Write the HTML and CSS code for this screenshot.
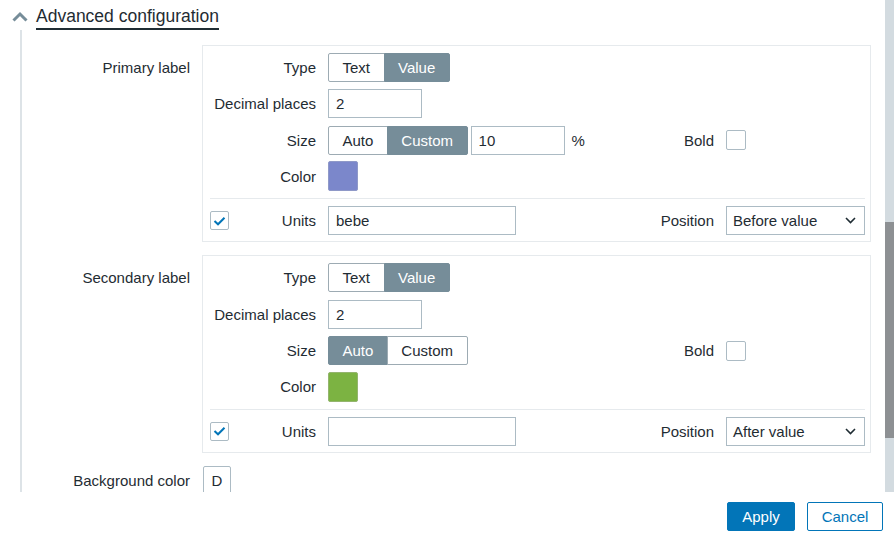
FILE: index.html
```html
<!DOCTYPE html>
<html lang="en">
<head>
<meta charset="utf-8">
<title>Advanced configuration</title>
<link rel="stylesheet" href="styles.css">
</head>
<body>
<div class="app">
  <div class="viewport">
    <div class="content">
      <div class="section-head">
        <svg class="chevron" width="16" height="11" viewBox="0 0 16 11"><path d="M1.5 9.5 L8 3 L14.5 9.5" fill="none" stroke="#768d99" stroke-width="3"/></svg>
        <span class="title">Advanced configuration</span>
      </div>
      <div class="section-body">
        <div class="form-grid">
          <div class="outer-label">Primary label</div>
          <div class="box">
            <div class="lbl">Type</div>
            <div class="ctl span3">
              <div class="seg"><span class="seg-btn">Text</span><span class="seg-btn on">Value</span></div>
            </div>

            <div class="lbl">Decimal places</div>
            <div class="ctl span3"><div class="input w94">2</div></div>

            <div class="lbl">Size</div>
            <div class="ctl">
              <div class="seg"><span class="seg-btn">Auto</span><span class="seg-btn on">Custom</span></div>
              <div class="input w94 gap3">10</div>
              <span class="unit">%</span>
            </div>
            <div class="lbl">Bold</div>
            <div class="ctl"><span class="check"></span></div>

            <div class="lbl">Color</div>
            <div class="ctl span3"><span class="swatch purple"></span></div>

            <div class="sep"></div>

            <div class="lbl split"><span class="check checked"><svg width="13" height="10" viewBox="0 0 13 10"><path d="M1.5 5 L5 8.3 L11.5 1.7" fill="none" stroke="#0275b8" stroke-width="2"/></svg></span><span>Units</span></div>
            <div class="ctl"><div class="input w188">bebe</div></div>
            <div class="lbl">Position</div>
            <div class="ctl"><div class="select">Before value<svg width="11" height="7" viewBox="0 0 11 7"><path d="M1 1 L5.5 5.5 L10 1" fill="none" stroke="#1f2c33" stroke-width="1.6"/></svg></div></div>
          </div>

          <div class="outer-label">Secondary label</div>
          <div class="box">
            <div class="lbl">Type</div>
            <div class="ctl span3">
              <div class="seg"><span class="seg-btn">Text</span><span class="seg-btn on">Value</span></div>
            </div>

            <div class="lbl">Decimal places</div>
            <div class="ctl span3"><div class="input w94">2</div></div>

            <div class="lbl">Size</div>
            <div class="ctl">
              <div class="seg"><span class="seg-btn on">Auto</span><span class="seg-btn">Custom</span></div>
            </div>
            <div class="lbl">Bold</div>
            <div class="ctl"><span class="check"></span></div>

            <div class="lbl">Color</div>
            <div class="ctl span3"><span class="swatch green"></span></div>

            <div class="sep"></div>

            <div class="lbl split"><span class="check checked"><svg width="13" height="10" viewBox="0 0 13 10"><path d="M1.5 5 L5 8.3 L11.5 1.7" fill="none" stroke="#0275b8" stroke-width="2"/></svg></span><span>Units</span></div>
            <div class="ctl"><div class="input w188"></div></div>
            <div class="lbl">Position</div>
            <div class="ctl"><div class="select">After value<svg width="11" height="7" viewBox="0 0 11 7"><path d="M1 1 L5.5 5.5 L10 1" fill="none" stroke="#1f2c33" stroke-width="1.6"/></svg></div></div>
          </div>

          <div class="outer-label bg-label">Background color</div>
          <div class="bg-ctl"><span class="color-btn">D</span></div>
        </div>
      </div>
    </div>
    <div class="scrollbar"><div class="thumb"></div></div>
  </div>
  <div class="footer">
    <button class="btn primary">Apply</button>
    <button class="btn secondary">Cancel</button>
  </div>
</div>
</body>
</html>
```

FILE: styles.css
```css
* { box-sizing: border-box; }
html, body { margin: 0; padding: 0; background: #ffffff; }
body {
  font-family: "Liberation Sans", Arial, sans-serif;
  font-size: 15px;
  color: #1f2c33;
}
.app {
  width: 894px;
  height: 544px;
  display: flex;
  flex-direction: column;
  overflow: hidden;
}
.viewport {
  height: 492px;
  display: flex;
  overflow: hidden;
}
.content {
  flex: 1;
  min-width: 0;
  overflow: hidden;
}
.scrollbar {
  width: 9px;
  background: #d3dbe0;
  flex: none;
}
.thumb {
  margin-top: 222px;
  height: 216px;
  background: #8d9093;
}

.section-head {
  display: flex;
  align-items: center;
  padding: 6px 0 0 12px;
  height: 30px;
}
.chevron { flex: none; margin-right: 8px; margin-top: -4px; }
.title {
  font-size: 17.5px;
  line-height: 20px;
  border-bottom: 2px solid #1f2c33;
  padding-bottom: 2px;
}
.section-body {
  margin-left: 20px;
  border-left: 2px solid #dde3e7;
  padding-top: 15px;
  min-height: 470px;
}
.form-grid {
  display: grid;
  grid-template-columns: 168px 669px;
  column-gap: 12px;
  row-gap: 13px;
  align-items: start;
}
.outer-label {
  text-align: right;
  line-height: 29px;
  margin-top: 8px;
}
.bg-label { margin-top: 0; }
.box {
  border: 1px solid #e6eaed;
  padding: 7px 5px 6px 7px;
  display: grid;
  grid-template-columns: 106px 1fr 100px 139px;
  column-gap: 12px;
  row-gap: 7.3px;
  align-items: center;
}
.lbl {
  text-align: right;
  line-height: 29px;
  white-space: nowrap;
}
.lbl.split {
  display: flex;
  justify-content: space-between;
  align-items: center;
}
.ctl {
  display: flex;
  align-items: center;
  height: 29px;
}
.span3 { grid-column: span 3; }
.sep {
  grid-column: 1 / -1;
  height: 1px;
  background: #e6eaed;
}

.seg { display: flex; height: 29px; }
.seg-btn {
  display: flex;
  align-items: center;
  padding: 0 13.5px;
  border: 1px solid #9dabb3;
  background: #ffffff;
  color: #1f2c33;
}
.seg-btn + .seg-btn { margin-left: -1px; }
.seg-btn:first-child { border-radius: 2px 0 0 2px; }
.seg-btn:last-child { border-radius: 0 2px 2px 0; }
.seg-btn.on {
  background: #768d99;
  border-color: #768d99;
  color: #ffffff;
}

.input {
  height: 29px;
  border: 1px solid #acbbc4;
  background: #ffffff;
  padding: 0 7px;
  display: flex;
  align-items: center;
}
.w94 { width: 94px; }
.w188 { width: 188px; }
.gap3 { margin-left: 3px; }
.unit { margin-left: 7px; }

.check {
  width: 20px;
  height: 20px;
  border: 1px solid #acbbc4;
  border-radius: 2px;
  background: #ffffff;
  display: flex;
  align-items: center;
  justify-content: center;
}
.check.checked { width: 19px; height: 19px; }

.swatch {
  width: 30px;
  height: 30px;
  border: 1px solid #acbbc4;
  border-radius: 2px;
}
.purple { background: #7b87cb; border-color: #8f99c8; }
.green { background: #7cb342; border-color: #94b56e; }

.select {
  width: 139px;
  height: 29px;
  border: 1px solid #acbbc4;
  padding: 0 8px 0 6px;
  display: flex;
  align-items: center;
  justify-content: space-between;
}

.bg-ctl { padding-left: 1px; }
.color-btn {
  display: flex;
  align-items: center;
  justify-content: center;
  width: 28px;
  height: 29px;
  border: 1px solid #acbbc4;
  border-radius: 2px;
}

.footer {
  height: 52px;
  display: flex;
  justify-content: flex-end;
  align-items: flex-start;
  gap: 12px;
  padding: 10px 11px 0 0;
}
.btn {
  font-family: "Liberation Sans", Arial, sans-serif;
  font-size: 15px;
  height: 29px;
  border-radius: 2px;
  padding: 0;
  cursor: pointer;
}
.btn.primary {
  width: 68px;
  background: #0275b8;
  border: 1px solid #0275b8;
  color: #ffffff;
}
.btn.secondary {
  width: 76px;
  background: #ffffff;
  border: 1px solid #0275b8;
  color: #0275b8;
}
```
